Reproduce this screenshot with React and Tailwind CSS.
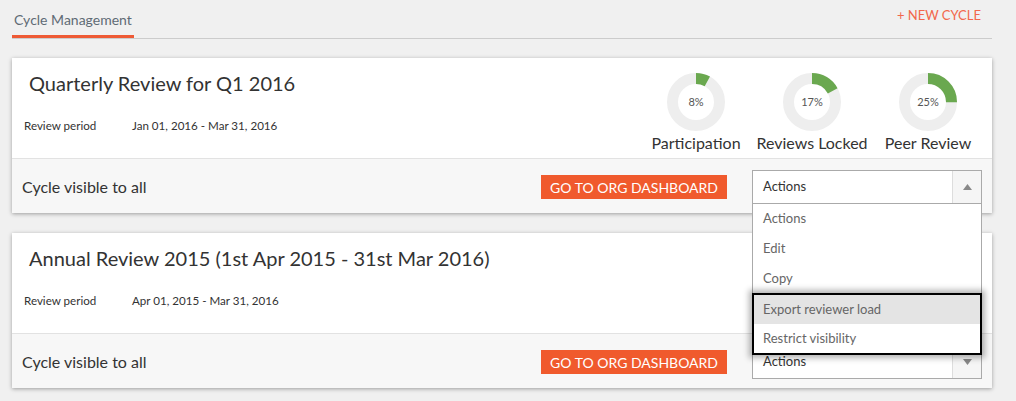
import React from "react";

const font = { fontFamily: "Lato, 'Noto Sans', sans-serif" };

function Donut({ pct }) {
  const r = 23.5;
  const c = 2 * Math.PI * r;
  const len = (pct / 100) * c;
  return (
    <div className="relative w-[58px] h-[58px]">
      <svg width="58" height="58" viewBox="0 0 58 58">
        <circle cx="29" cy="29" r={r} fill="none" stroke="#eeeeee" strokeWidth="11" />
        {pct > 0 && (
          <circle
            cx="29"
            cy="29"
            r={r}
            fill="none"
            stroke="#6aa84f"
            strokeWidth="11"
            strokeDasharray={`${len} ${c}`}
            transform="rotate(-90 29 29)"
          />
        )}
      </svg>
      <div className="absolute inset-0 flex items-center justify-center text-[11px] text-[#555]">
        {pct}%
      </div>
    </div>
  );
}

function Stat({ pct, label }) {
  return (
    <div className="w-[116px] flex flex-col items-center">
      <Donut pct={pct} />
      <div className="mt-[2px] text-[16px] leading-[20px] text-[#333] whitespace-nowrap">{label}</div>
    </div>
  );
}

function Select({ up }) {
  return (
    <div className="w-[230px] h-[34px] border border-[#aaaaaa] bg-white flex">
      <div className="flex-1 flex items-center pl-[10px] text-[13px] text-[#333]">Actions</div>
      <div className="w-[29px] border-l border-[#dddddd] bg-[#f5f5f5] flex items-center justify-center">
        <svg width="9" height="6" viewBox="0 0 9 6">
          {up ? <path d="M0 6 L4.5 0 L9 6 Z" fill="#888" /> : <path d="M0 0 L4.5 6 L9 0 Z" fill="#888" />}
        </svg>
      </div>
    </div>
  );
}

function Card({ title, period, stats, up, children }) {
  return (
    <div className="relative bg-white shadow-[0_1px_4px_rgba(0,0,0,0.35)]">
      <div className="h-[101px] flex justify-between border-b border-[#e2e2e2]">
        <div className="pl-[12px] pt-[11px]">
          <div className="pl-[5px] text-[20px] leading-[28px] text-[#333] whitespace-nowrap">{title}</div>
          <div className="mt-[21px] flex text-[11.6px] leading-[16px] text-[#333]">
            <div className="w-[108px]">Review period</div>
            <div>{period}</div>
          </div>
        </div>
        <div className="flex pt-[15px] pr-[6px]">
          {stats.map((s) => (
            <Stat key={s.label} pct={s.pct} label={s.label} />
          ))}
        </div>
      </div>
      <div className="h-[54px] bg-[#f7f7f7] flex items-center pl-[10px] pr-[10px] pt-[2px]">
        <div className="flex-1 text-[16px] text-[#333]">Cycle visible to all</div>
        <div className="h-[24px] px-[9px] bg-[#f05a2d] text-white text-[14px] flex items-center uppercase">
          Go to org dashboard
        </div>
        <div className="ml-[25px]">
          <Select up={up} />
        </div>
      </div>
      {children}
    </div>
  );
}

export default function App() {
  return (
    <div className="w-[1016px] h-[401px] bg-[#f0f0f0] overflow-hidden" style={font}>
      <div className="ml-[12px] w-[980px]">
        <div className="flex justify-between border-b border-[#cccccc]">
          <div className="pt-[10px] pb-[5px] px-[2px] border-b-[3px] border-[#ee5a35] text-[14px] leading-[20px] text-[#5f6b75]">
            Cycle Management
          </div>
          <div className="pt-[6px] pr-[11px] text-[13px] text-[#f2674b]">+ NEW CYCLE</div>
        </div>
        <div className="mt-[19px] flex flex-col gap-[20px]">
          <Card
            title="Quarterly Review for Q1 2016"
            period="Jan 01, 2016 - Mar 31, 2016"
            stats={[
              { pct: 8, label: "Participation" },
              { pct: 17, label: "Reviews Locked" },
              { pct: 25, label: "Peer Review" },
            ]}
            up
          >
            <div className="absolute z-10 left-[740px] top-[146px] w-[230px] bg-white border-x border-[#aaaaaa] text-[13px] text-[#666]">
              <div className="h-[30px] flex items-center pl-[10px]">Actions</div>
              <div className="h-[30px] flex items-center pl-[10px]">Edit</div>
              <div className="h-[30px] flex items-center pl-[10px]">Copy</div>
              <div className="-mx-px -mt-[1px] border-2 border-black shadow-[0_0_6px_3px_rgba(0,0,0,0.3)]">
                <div className="h-[29px] flex items-center pl-[9px] bg-[#e4e4e4]">Export reviewer load</div>
                <div className="h-[29px] flex items-center pl-[9px] bg-white">Restrict visibility</div>
              </div>
            </div>
          </Card>
          <Card
            title="Annual Review 2015 (1st Apr 2015 - 31st Mar 2016)"
            period="Apr 01, 2015 - Mar 31, 2016"
            stats={[{ pct: 0, label: "Participation" }]}
          />
        </div>
      </div>
    </div>
  );
}
